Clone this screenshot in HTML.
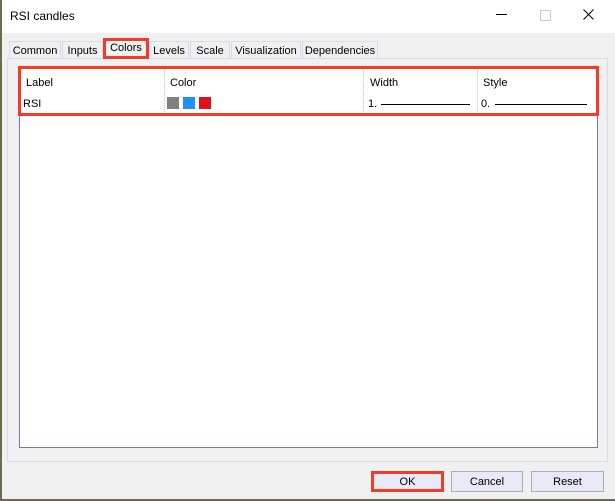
<!DOCTYPE html><html><head><style>
body{margin:0;width:615px;height:501px;position:relative;overflow:hidden;font-family:"Liberation Sans",sans-serif;font-size:11px;color:#000;background:#fff}
.a{position:absolute}
.tab{position:absolute;top:41px;height:17px;border:1px solid #d8d8ee;border-bottom:none;background:#f0f0f0;text-align:center;line-height:18px;box-sizing:border-box}
.btn{position:absolute;top:471px;height:21px;border:1px solid #adadad;background:#e8e8f6;text-align:center;line-height:20px;box-sizing:border-box}
.sep{position:absolute;top:70px;height:44px;border-left:1px dotted #ccc}
</style></head><body>
<div class="a" style="left:0;top:0;width:615px;height:501px;background:#f0f0f0;border-left:2px solid #6b6b50;border-bottom:2px solid #6b6b50;box-sizing:border-box"></div>
<div class="a" style="left:2px;top:0;width:613px;height:33px;background:#fff"></div>
<div class="a" style="left:10px;top:9px;font-size:12px">RSI candles</div>
<div class="a" style="left:496px;top:14px;width:11px;border-top:1px solid #000"></div>
<div class="a" style="left:540px;top:10px;width:9px;height:9px;border:1px solid #ccc"></div>
<svg class="a" style="left:583px;top:9px" width="11" height="11"><path d="M0.5 0.5L10.5 10.5M10.5 0.5L0.5 10.5" stroke="#000" stroke-width="1"/></svg>
<div class="a" style="left:7px;top:58px;width:601px;height:404px;border:1px solid #d8d8ee;box-sizing:border-box;background:#f0f0f0"></div>
<div class="tab" style="left:9px;width:52px">Common</div>
<div class="tab" style="left:62px;width:41px">Inputs</div>
<div class="tab" style="left:149px;width:40px">Levels</div>
<div class="tab" style="left:190px;width:40px">Scale</div>
<div class="tab" style="left:231px;width:70px">Visualization</div>
<div class="tab" style="left:302px;width:76px">Dependencies</div>
<div class="a" style="left:103px;top:38px;width:46px;height:21px;border:3px solid #f03c28;box-sizing:border-box;background:#f0f0f0;text-align:center;line-height:15px">Colors</div>
<div class="a" style="left:19px;top:66px;width:579px;height:382px;border:1px solid #7878a8;box-sizing:border-box;background:#fff"></div>
<div class="sep" style="left:164px"></div><div class="sep" style="left:363px"></div><div class="sep" style="left:477px"></div>
<div class="a" style="left:26px;top:77px">Label</div>
<div class="a" style="left:170px;top:77px">Color</div>
<div class="a" style="left:370px;top:77px">Width</div>
<div class="a" style="left:483px;top:77px">Style</div>
<div class="a" style="left:23px;top:98px">RSI</div>
<div class="a" style="left:167px;top:97px;width:12px;height:12px;background:#808080"></div>
<div class="a" style="left:183px;top:97px;width:12px;height:12px;background:#1e90ff"></div>
<div class="a" style="left:199px;top:97px;width:12px;height:12px;background:#e0101e"></div>
<div class="a" style="left:368px;top:98px">1.</div>
<div class="a" style="left:381px;top:104px;width:89px;border-top:1px solid #000"></div>
<div class="a" style="left:481px;top:98px">0.</div>
<div class="a" style="left:495px;top:104px;width:92px;border-top:1px solid #000"></div>
<div class="a" style="left:18px;top:66px;width:581px;height:50px;border:3px solid #f03c28;box-sizing:border-box"></div>
<div class="btn" style="left:371px;width:73px;border:3px solid #f03c28;line-height:16px">OK</div>
<div class="btn" style="left:451px;width:72px">Cancel</div>
<div class="btn" style="left:531px;width:73px">Reset</div>
</body></html>
